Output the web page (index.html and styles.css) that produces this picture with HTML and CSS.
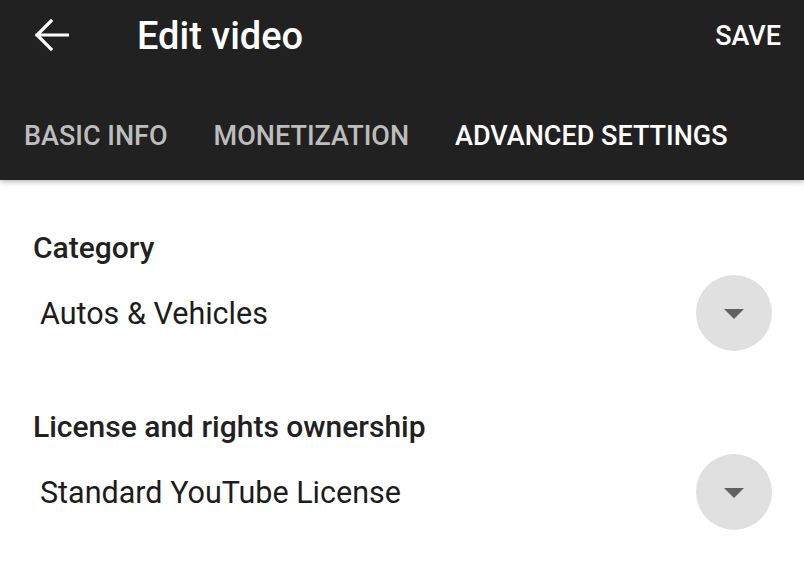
FILE: index.html
```html
<!DOCTYPE html>
<html>
<head>
<meta charset="utf-8">
<link rel="stylesheet" href="styles.css">
</head>
<body>
<header class="appbar">
  <div class="toolbar">
    <svg class="back" width="36" height="36" viewBox="0 0 36 36"><path d="M35 17H4M18 3L4 17l14 14" fill="none" stroke="#fff" stroke-width="3.2" stroke-linecap="square"/></svg>
    <h1 class="title">Edit video</h1>
    <span class="save">SAVE</span>
  </div>
  <nav class="tabs">
    <span class="tab">BASIC INFO</span>
    <span class="tab">MONETIZATION</span>
    <span class="tab active">ADVANCED SETTINGS</span>
  </nav>
</header>
<main class="content">
  <section class="field">
    <div class="label">Category</div>
    <div class="select">
      <span class="value">Autos &amp; Vehicles</span>
      <span class="drop"><svg width="20" height="10" viewBox="0 0 20 10"><path d="M0 0h20L10 10z" fill="#616161"/></svg></span>
    </div>
  </section>
  <section class="field">
    <div class="label">License and rights ownership</div>
    <div class="select">
      <span class="value">Standard YouTube License</span>
      <span class="drop"><svg width="20" height="10" viewBox="0 0 20 10"><path d="M0 0h20L10 10z" fill="#616161"/></svg></span>
    </div>
  </section>
</main>
</body>
</html>
```
FILE: styles.css
```css
* { box-sizing: border-box; }
html, body { margin: 0; padding: 0; }
body {
  width: 804px;
  height: 586px;
  background: #fff;
  font-family: Roboto, "Noto Sans", sans-serif;
  overflow: hidden;
}
.appbar {
  background: #212121;
  height: 180px;
  display: flex;
  flex-direction: column;
  box-shadow: 0 2px 5px rgba(0,0,0,0.28);
  position: relative;
  z-index: 1;
}
.toolbar {
  height: 72px;
  display: flex;
  align-items: center;
  padding-left: 33px;
  padding-right: 23px;
}
.back { display: block; flex: none; }
.title {
  margin: 0 0 0 68px;
  font-size: 38px;
  font-weight: 500;
  color: #fff;
  line-height: 44px;
  flex: 1;
}
.save {
  font-size: 27px;
  font-weight: 500;
  color: #fff;
  line-height: 32px;
}
.tabs {
  margin-top: 20px;
  height: 88px;
  display: flex;
  align-items: center;
  padding-left: 24px;
  gap: 46px;
}
.tab {
  font-size: 27px;
  font-weight: 500;
  color: #bdbdbd;
  line-height: 32px;
}
.tab.active { color: #fff; }
.content {
  padding: 52px 32px 0 33px;
}
.field + .field { margin-top: 60px; }
.label {
  font-size: 30px;
  font-weight: 500;
  color: #212121;
  line-height: 32px;
}
.select {
  margin-top: 11px;
  height: 76px;
  display: flex;
  align-items: center;
  justify-content: space-between;
  padding-left: 7px;
}
.value {
  font-size: 30.5px;
  color: #1c1c1c;
  line-height: 36px;
  padding-top: 2px;
}
.drop {
  width: 76px;
  height: 76px;
  border-radius: 50%;
  background: #e0e0e0;
  display: flex;
  align-items: center;
  justify-content: center;
}
.drop svg { display: block; margin-top: 2px; }
```
